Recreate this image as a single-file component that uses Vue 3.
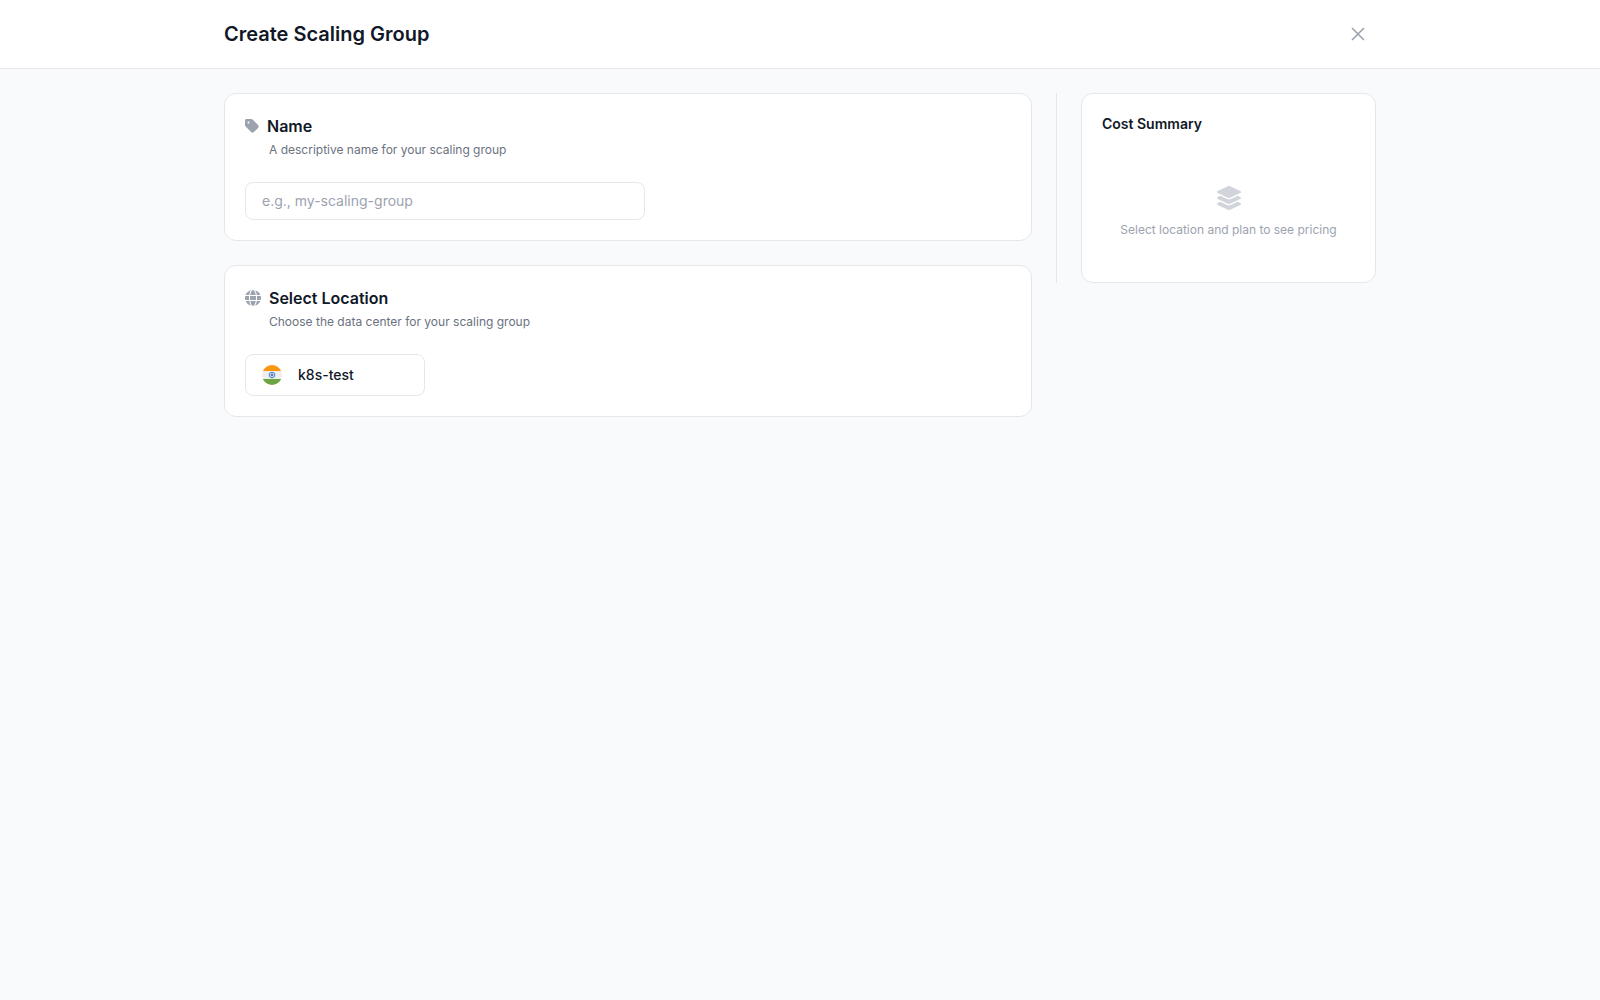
<template>
  <div class="page">
    <header class="page-header">
      <div class="header-inner">
        <h1 class="page-title">Create Scaling Group</h1>
        <button type="button" class="close-btn" aria-label="Close">
          <svg viewBox="0 0 24 24" width="24" height="24" fill="none" stroke="currentColor" stroke-width="1.6">
            <path d="M6 6l12 12M18 6l-12 12" />
          </svg>
        </button>
      </div>
    </header>

    <div class="page-body">
      <main class="form-column">
        <section class="card">
          <div class="card-title">
            <svg class="card-icon" viewBox="0 0 448 512" width="14" height="16" fill="currentColor" aria-hidden="true">
              <path d="M0 80V229.500c0 17 6.700 33.300 18.700 45.300l176 176c25 25 65.500 25 90.500 0L418.700 317.300c25-25 25-65.500 0-90.500l-176-176c-12-12-28.300-18.700-45.300-18.700H48C21.500 32 0 53.500 0 80zm112 32a32 32 0 1 1 0 64 32 32 0 1 1 0-64z" />
            </svg>
            <label for="group-name">Name</label>
          </div>
          <p class="card-text">A descriptive name for your scaling group</p>
          <input
            id="group-name"
            v-model="name"
            type="text"
            class="name-input"
            placeholder="e.g., my-scaling-group"
          />
        </section>

        <section class="card">
          <div class="card-title">
            <svg class="card-icon" viewBox="0 0 512 512" width="16" height="16" fill="currentColor" aria-hidden="true">
              <path d="M352 256c0 22.200-1.200 43.600-3.300 64H163.300c-2.200-20.400-3.300-41.800-3.300-64s1.200-43.600 3.300-64H348.700c2.200 20.400 3.300 41.800 3.300 64zm28.800-64H503.900c5.300 20.500 8.100 41.900 8.100 64s-2.800 43.500-8.100 64H380.800c2.100-20.600 3.200-42 3.200-64s-1.100-43.400-3.200-64zm112.600-32H376.700c-10-63.900-29.800-117.400-55.300-151.600 78.300 20.700 142 77.500 171.900 151.600zm-149.100 0H167.700c6.100-36.400 15.500-68.600 27-94.700 10.500-23.600 22.200-40.700 33.500-51.500C239.400 3.200 248.700 0 256 0s16.600 3.200 27.800 13.800c11.300 10.800 23 27.900 33.500 51.500 11.600 26 20.900 58.200 27 94.700zm-209 0H18.600C48.600 85.900 112.200 29.100 190.600 8.400 165.100 42.600 145.300 96.100 135.300 160zM8.100 192H131.200c-2.100 20.600-3.200 42-3.200 64s1.100 43.400 3.200 64H8.100C2.800 299.500 0 278.100 0 256s2.800-43.500 8.100-64zM194.700 446.600c-11.600-26-20.900-58.200-27-94.600H344.300c-6.100 36.400-15.500 68.600-27 94.600-10.500 23.600-22.200 40.700-33.500 51.500C272.600 508.800 263.300 512 256 512s-16.600-3.200-27.800-13.800c-11.300-10.800-23-27.900-33.500-51.600zM135.300 352c10 63.900 29.800 117.400 55.300 151.600C112.200 482.900 48.600 426.100 18.600 352H135.300zm358.100 0c-30 74.100-93.600 130.900-171.900 151.600 25.500-34.200 45.200-87.700 55.300-151.600H493.400z" />
            </svg>
            <h2>Select Location</h2>
          </div>
          <p class="card-text">Choose the data center for your scaling group</p>
          <div class="location-list">
            <button
              v-for="location in locations"
              :key="location"
              type="button"
              class="location-btn"
              :class="{ 'location-selected': location === selectedLocation }"
              @click="selectedLocation = location"
            >
              <svg viewBox="0 0 20 20" width="20" height="20" aria-hidden="true">
                <clipPath id="flag-clip"><circle cx="10" cy="10" r="10" /></clipPath>
                <g clip-path="url(#flag-clip)">
                  <rect width="20" height="20" fill="#eeeeee" />
                  <rect width="20" height="6" fill="#ff9811" />
                  <rect y="14" width="20" height="6" fill="#6da544" />
                </g>
                <circle cx="10" cy="10" r="2.800" fill="#eeeeee" stroke="#4a80c8" stroke-width="1" />
                <circle cx="10" cy="10" r="1.400" fill="#4a80c8" />
              </svg>
              <span>{{ location }}</span>
            </button>
          </div>
        </section>
      </main>

      <aside class="summary-column">
        <section class="card">
          <h2 class="summary-title">Cost Summary</h2>
          <div class="summary-empty">
            <svg viewBox="32 0 512 512" width="24" height="24" fill="currentColor" aria-hidden="true">
              <path d="M264.500 5.200c14.900-6.900 32.100-6.900 47 0l218.600 101c8.500 3.900 13.900 12.400 13.900 21.800s-5.400 17.900-13.900 21.800l-218.600 101c-14.900 6.900-32.100 6.900-47 0L45.900 149.800C37.400 145.800 32 137.300 32 128s5.400-17.900 13.900-21.800L264.500 5.200z" />
              <path d="M476.900 209.600l53.200 24.600c8.500 3.900 13.900 12.400 13.900 21.800s-5.400 17.900-13.900 21.800l-218.600 101c-14.900 6.900-32.100 6.900-47 0L45.900 277.800C37.400 273.800 32 265.300 32 256s5.400-17.900 13.900-21.800l53.200-24.600 152 70.200c23.400 10.800 50.400 10.800 73.800 0l152-70.200z" />
              <path d="M476.900 337.600l53.200 24.600c8.500 3.900 13.900 12.400 13.900 21.800s-5.400 17.900-13.900 21.800l-218.600 101c-14.900 6.900-32.100 6.900-47 0L45.900 405.800C37.400 401.800 32 393.300 32 384s5.400-17.900 13.900-21.800l53.200-24.600 152 70.200c23.400 10.800 50.400 10.800 73.800 0l152-70.200z" />
            </svg>
            <p>Select location and plan to see pricing</p>
          </div>
        </section>
      </aside>
    </div>
  </div>
</template>

<script setup>
import { ref } from 'vue'

const name = ref('')
const selectedLocation = ref('')
const locations = ['k8s-test']
</script>

<style>
body {
  margin: 0;
  background: #f9fafb;
}
</style>

<style scoped>
.page {
  min-height: 100vh;
  background: #f9fafb;
  color: #111827;
  font-family: Inter, "Liberation Sans", sans-serif;
  font-size: 14px;
  line-height: 20px;
}

.page *,
.page *::before {
  box-sizing: border-box;
}

h1,
h2,
p {
  margin: 0;
}

button,
input {
  font: inherit;
  color: inherit;
}

/* HEADER */
.page-header {
  background: #fff;
  border-bottom: 1px solid #e5e7eb;
}

.header-inner,
.page-body {
  display: flex;
  max-width: 1200px;
  margin: 0 auto;
  padding: 0 24px;
  box-sizing: border-box;
}

.header-inner {
  align-items: center;
  justify-content: space-between;
  padding-top: 16px;
  padding-bottom: 16px;
}

.page-title {
  font-size: 20px;
  line-height: 28px;
  font-weight: 600;
}

.close-btn {
  display: flex;
  padding: 6px;
  border: none;
  border-radius: 8px;
  background: none;
  color: #9ca3af;
  cursor: pointer;
}

/* BODY */
.page-body {
  align-items: flex-start;
  gap: 24px;
  padding-top: 24px;
  padding-bottom: 24px;
}

.form-column {
  display: flex;
  flex: 1;
  flex-direction: column;
  gap: 24px;
  min-width: 0;
}

.summary-column {
  width: 320px;
  padding-left: 24px;
  border-left: 1px solid #e5e7eb;
}

.card {
  padding: 20px;
  border: 1px solid #e5e7eb;
  border-radius: 12px;
  background: #fff;
}

.card-title {
  display: flex;
  align-items: center;
  gap: 8px;
}

.card-title h2,
.card-title label {
  font-size: 16px;
  line-height: 24px;
  font-weight: 600;
}

.card-icon {
  color: #9ca3af;
}

.card-text {
  margin: 4px 0 24px 24px;
  color: #6b7280;
  font-size: 12px;
  line-height: 16px;
}

.name-input {
  display: block;
  width: 100%;
  max-width: 400px;
  padding: 8px 16px;
  border: 1px solid #e5e7eb;
  border-radius: 8px;
  background: #fff;
  line-height: 20px;
}

.name-input::placeholder {
  color: #9ca3af;
  opacity: 1;
}

.location-list {
  display: flex;
  flex-wrap: wrap;
  gap: 12px;
}

.location-btn {
  display: flex;
  align-items: center;
  gap: 16px;
  width: 180px;
  padding: 10px 16px;
  border: 1px solid #e5e7eb;
  border-radius: 8px;
  background: #fff;
  font-weight: 500;
  cursor: pointer;
}

.location-selected {
  border-color: #3b82f6;
}

/* SUMMARY */
.summary-title {
  font-size: 14px;
  line-height: 20px;
  font-weight: 600;
}

.summary-empty {
  display: flex;
  flex-direction: column;
  align-items: center;
  gap: 12px;
  margin-top: 20px;
  padding: 32px 0 24px;
  color: #d1d5db;
}

.summary-empty p {
  color: #9ca3af;
  font-size: 12px;
  line-height: 16px;
  text-align: center;
}
</style>
